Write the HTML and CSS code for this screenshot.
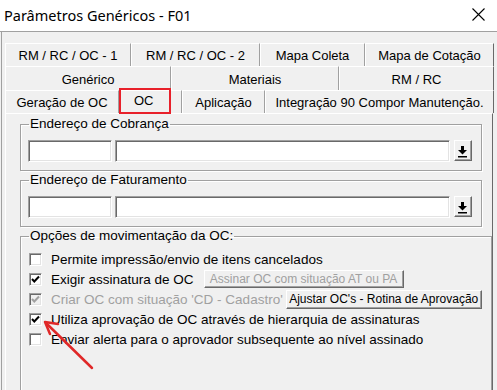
FILE: index.html
```html
<!DOCTYPE html>
<html lang="pt">
<head>
<meta charset="UTF-8">
<title>Parâmetros Genéricos - F01</title>
<link rel="stylesheet" href="styles.css">
</head>
<body>

<div class="titlebar">
    <span class="title">Parâmetros Genéricos - F01</span>
    <svg class="close" width="13" height="13" viewBox="0 0 13 13">
        <path d="M0.5 0.5 L12.5 12.5 M12.5 0.5 L0.5 12.5" stroke="#000" stroke-width="1.1" fill="none"/>
    </svg>
</div>

<div class="window">
    <div class="tabs">
        <div class="tab-row row1">
            <div class="tab t126">RM / RC / OC - 1</div>
            <div class="tab t129">RM / RC / OC - 2</div>
            <div class="tab t105">Mapa Coleta</div>
            <div class="tab t129 last">Mapa de Cotação</div>
        </div>
        <div class="tab-row row2">
            <div class="tab t166">Genérico</div>
            <div class="tab t168">Materiais</div>
            <div class="tab t155 last">RM / RC</div>
        </div>
        <div class="tab-row row3">
            <div class="tab t114">Geração de OC</div>
            <div class="tab t63 selected">OC<span class="mark"></span></div>
            <div class="tab t83">Aplicação</div>
            <div class="tab t229 last">Integração 90 Compor Manutenção.</div>
        </div>
    </div>

    <div class="panel">
        <fieldset class="group">
            <legend>Endereço de Cobrança</legend>
            <div class="field-row">
                <span class="input short"></span>
                <span class="input long"></span>
                <span class="pick">
                    <svg width="16" height="19" viewBox="0 0 16 19">
                        <rect x="6" y="5" width="3" height="4" fill="#000"/>
                        <polygon points="3,9 12,9 7.5,13.5" fill="#000"/>
                        <rect x="3" y="15" width="9" height="1.5" fill="#000"/>
                    </svg>
                </span>
            </div>
        </fieldset>

        <fieldset class="group second">
            <legend>Endereço de Faturamento</legend>
            <div class="field-row">
                <span class="input short"></span>
                <span class="input long"></span>
                <span class="pick">
                    <svg width="16" height="19" viewBox="0 0 16 19">
                        <rect x="6" y="5" width="3" height="4" fill="#000"/>
                        <polygon points="3,9 12,9 7.5,13.5" fill="#000"/>
                        <rect x="3" y="15" width="9" height="1.5" fill="#000"/>
                    </svg>
                </span>
            </div>
        </fieldset>

        <fieldset class="group options">
            <legend>Opções de movimentação da OC:</legend>
            <div class="check-row">
                <span class="check"></span>
                <span class="text">Permite impressão/envio de itens cancelados</span>
            </div>
            <div class="check-row">
                <span class="check on">
                    <svg width="11" height="11" viewBox="0 0 11 11"><path d="M2 5 L4.3 7.5 L9 2.5" stroke="#000" stroke-width="2" fill="none"/></svg>
                </span>
                <span class="text">Exigir assinatura de OC</span>
                <span class="button disabled sign">Assinar OC com situação AT ou PA</span>
            </div>
            <div class="check-row">
                <span class="check off">
                    <svg width="11" height="11" viewBox="0 0 11 11"><path d="M2 5 L4.3 7.5 L9 2.5" stroke="#a0a0a0" stroke-width="2" fill="none"/></svg>
                </span>
                <span class="text grey">Criar OC com situação 'CD - Cadastro'</span>
                <span class="button adjust">Ajustar OC's - Rotina de Aprovação</span>
            </div>
            <div class="check-row">
                <span class="check on">
                    <svg width="11" height="11" viewBox="0 0 11 11"><path d="M2 5 L4.3 7.5 L9 2.5" stroke="#000" stroke-width="2" fill="none"/></svg>
                </span>
                <span class="text">Utiliza aprovação de OC através de hierarquia de assinaturas</span>
            </div>
            <div class="check-row">
                <span class="check"></span>
                <span class="text">Enviar alerta para o aprovador subsequente ao nível assinado</span>
            </div>
        </fieldset>
    </div>
</div>

<!-- annotation arrow -->
<svg class="arrow" width="497" height="390" viewBox="0 0 497 390">
    <path d="M92 368 L47 324" stroke="#e02828" stroke-width="2.5" fill="none" stroke-linecap="round"/>
    <path d="M58 324 L45 322 L50 334" stroke="#e02828" stroke-width="2.5" fill="none" stroke-linecap="round" stroke-linejoin="round"/>
</svg>

</body>
</html>
```

FILE: styles.css
```css
body {
    margin: 0;
    width: 497px;
    height: 390px;
    overflow: hidden;
    background-color: #f0f0f0;
    font-family: "Liberation Sans", Arial, sans-serif;
    font-size: 13px;
    color: #000;
    position: relative;
}

.titlebar {
    height: 31px;
    background-color: #ffffff;
    border-bottom: 1px solid #a0a0a0;
    display: flex;
    align-items: center;
    justify-content: space-between;
}

.title {
    font-family: "Noto Sans", sans-serif;
    font-size: 14.5px;
    margin-left: 4px;
    margin-top: -1px;
}

.close {
    margin-right: 12px;
    margin-top: -3px;
}

.window {
    height: 358px;
    border-left: 1px solid #a0a0a0;
    margin-left: 1px;
}

.tabs {
    padding: 11px 3px 0 3px;
}

.tab-row {
    display: flex;
    height: 23px;
}

.row2 {
    height: 24px;
}

.tab {
    box-sizing: border-box;
    display: flex;
    align-items: center;
    justify-content: center;
    border-top: 1px solid #ffffff;
    border-left: 1px solid #ffffff;
    border-right: 1px solid #a0a0a0;
    white-space: nowrap;
    padding-top: 1px;
}

.tab.last {
    border-right: 1px solid #696969;
}

.t63 { width: 63px; }
.t83 { width: 83px; }
.t105 { width: 105px; }
.t114 { width: 114px; }
.t126 { width: 126px; }
.t129 { width: 129px; }
.t155 { width: 155px; }
.t166 { width: 166px; }
.t168 { width: 168px; }
.t229 { width: 229px; }

.tab.selected {
    position: relative;
    justify-content: flex-start;
    padding: 0 0 3px 14px;
}

.mark {
    position: absolute;
    left: -1px;
    top: -3px;
    width: 48px;
    height: 22px;
    border: 2px solid #e8202a;
}

.panel {
    margin: 0 4px 0 3px;
    height: 276px;
    overflow: hidden;
    border-top: 1px solid #ffffff;
    border-left: 1px solid #ffffff;
    border-right: 1px solid #696969;
    padding-top: 2px;
}

.group {
    margin: 0 10px 0 14px;
    padding: 8px 9px 8px 7px;
    border: 1px solid #a0a0a0;
    box-shadow: inset 1px 1px #ffffff, 1px 1px #ffffff;
}

.group legend {
    font-size: 13.5px;
    line-height: 16px;
    padding: 0 1px;
    margin-left: 1px;
}

.group.second {
    margin-top: 1px;
}

.group.options {
    margin-top: 1px;
    padding-top: 5px;
    height: 180px;
    border-bottom: none;
}

.field-row {
    display: flex;
    align-items: flex-start;
}

.input {
    box-sizing: border-box;
    height: 22px;
    background-color: #ffffff;
    border: 1px solid;
    border-color: #a0a0a0 #ffffff #ffffff #a0a0a0;
    box-shadow: inset 1px 1px #696969, inset -1px -1px #e3e3e3;
}

.input.short {
    width: 84px;
    margin-right: 3px;
}

.input.long {
    width: 335px;
    margin-right: 4px;
}

.pick {
    box-sizing: border-box;
    width: 18px;
    height: 21px;
    border: 1px solid;
    border-color: #ffffff #696969 #696969 #ffffff;
    box-shadow: inset -1px -1px #a0a0a0;
    display: flex;
}

.check-row {
    display: flex;
    align-items: center;
    height: 20px;
    white-space: nowrap;
    font-size: 13.5px;
}

.check {
    box-sizing: border-box;
    width: 13px;
    height: 13px;
    margin-left: 1px;
    margin-right: 9px;
    background-color: #ffffff;
    border: 1px solid;
    border-color: #a0a0a0 #ffffff #ffffff #a0a0a0;
    box-shadow: inset 1px 1px #696969, inset -1px -1px #e3e3e3;
    display: flex;
}

.check.off {
    background-color: #f0f0f0;
}

.text.grey {
    color: #a0a0a0;
}

.button {
    box-sizing: border-box;
    font-size: 12px;
    height: 18px;
    display: flex;
    align-items: center;
    justify-content: center;
    border: 1px solid;
    border-color: #ffffff #696969 #696969 #ffffff;
    box-shadow: inset -1px -1px #a0a0a0;
}

.button.disabled {
    color: #a0a0a0;
}

.button.sign {
    width: 200px;
    margin-left: 10px;
}

.button.adjust {
    width: 196px;
    height: 19px;
    margin-left: 3px;
}

.arrow {
    position: absolute;
    left: 0;
    top: 0;
    pointer-events: none;
}
```
